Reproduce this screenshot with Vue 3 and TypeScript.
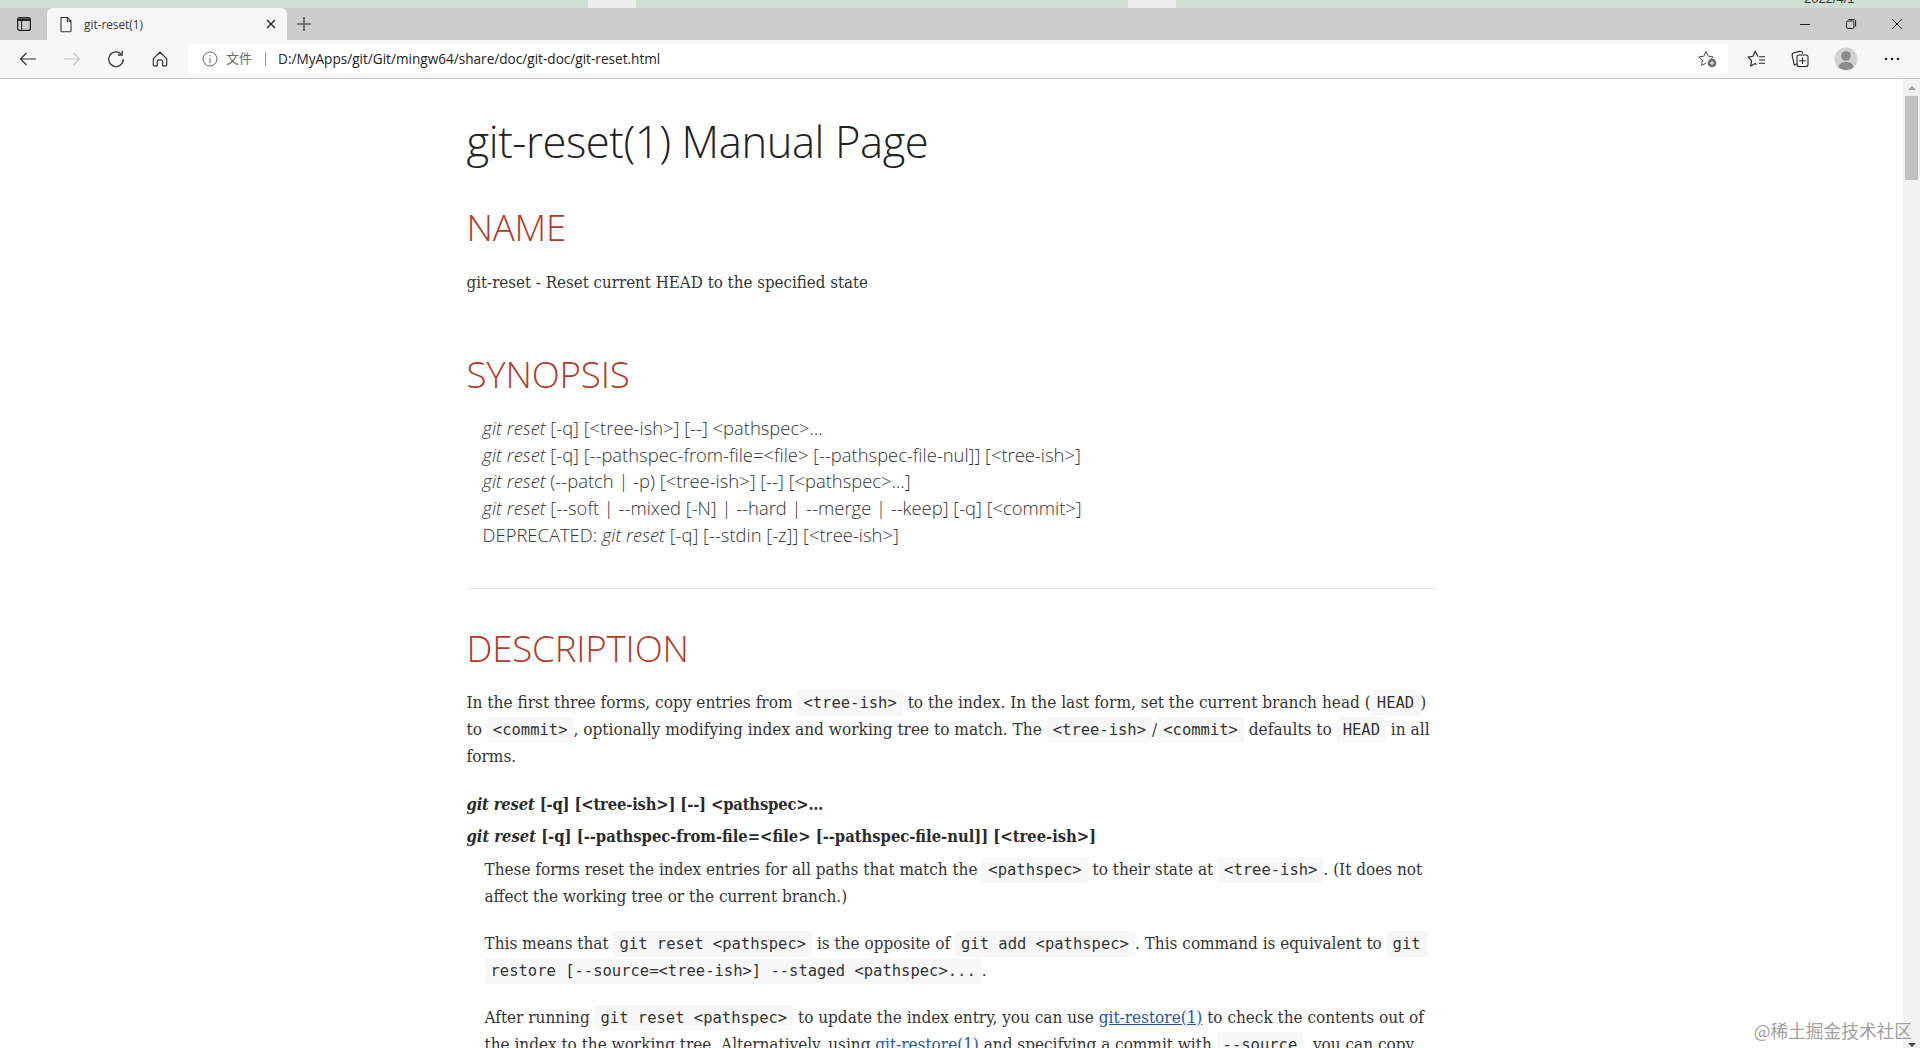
<script setup lang="ts">
const synopsis = [
  { pre: '', rest: ' [-q] [<tree-ish>] [--] <pathspec>…' },
  { pre: '', rest: ' [-q] [--pathspec-from-file=<file> [--pathspec-file-nul]] [<tree-ish>]' },
  { pre: '', rest: ' (--patch | -p) [<tree-ish>] [--] [<pathspec>…]' },
  { pre: '', rest: ' [--soft | --mixed [-N] | --hard | --merge | --keep] [-q] [<commit>]' },
  { pre: 'DEPRECATED: ', rest: ' [-q] [--stdin [-z]] [<tree-ish>]' },
]
</script>

<template>
  <div class="window">
    <div class="wallpaper">
      <span class="gap gap-a"></span>
      <span class="gap gap-b"></span>
      <span class="date">2022/4/1</span>
    </div>

    <div class="tabstrip">
      <div class="sidebtn">
        <svg width="16" height="16" viewBox="0 0 16 16" fill="none" stroke="#222" stroke-width="1.2">
          <rect x="1.6" y="1.6" width="12.8" height="12.8" rx="2" />
          <path d="M2 2.500h12v2.500H2z" fill="#222" stroke="none" />
          <path d="M5.600 5v9" stroke-width="1" />
        </svg>
      </div>
      <div class="tab">
        <svg width="14" height="17" viewBox="0 0 14 17" fill="none" stroke="#333" stroke-width="1.1">
          <path d="M2 1.500h6.500L12 5v10a.8.8 0 0 1-.8.8H2.800A.8.8 0 0 1 2 15z" />
          <path d="M8.300 1.500V5.300H12" />
        </svg>
        <span class="tab-title">git-reset(1)</span>
        <svg class="tab-close" width="10" height="10" viewBox="0 0 10 10" stroke="#222" stroke-width="1.4">
          <path d="M1 1l8 8M9 1l-8 8" />
        </svg>
      </div>
      <svg class="newtab" width="14" height="14" viewBox="0 0 14 14" stroke="#333" stroke-width="1.1">
        <path d="M7 0v14M0 7h14" />
      </svg>
      <div class="winctl">
        <svg width="12" height="12" viewBox="0 0 12 12" stroke="#222" stroke-width="1"><path d="M1 6.500h10" /></svg>
        <svg width="12" height="12" viewBox="0 0 12 12" fill="none" stroke="#222" stroke-width="1">
          <rect x="1.500" y="3" width="7.500" height="7.500" rx="1.400" />
          <path d="M3.500 1.500h5.500a1.600 1.600 0 0 1 1.600 1.600v5.400" />
        </svg>
        <svg width="12" height="12" viewBox="0 0 12 12" stroke="#222" stroke-width="1"><path d="M1 1l10 10M11 1L1 11" /></svg>
      </div>
    </div>

    <div class="toolbar">
      <div class="nav">
        <svg width="18" height="18" viewBox="0 0 18 18" fill="none" stroke="#333" stroke-width="1.200">
          <path d="M17 9H1.500M7.500 3L1.500 9l6 6" />
        </svg>
        <svg width="18" height="18" viewBox="0 0 18 18" fill="none" stroke="#c4c4c4" stroke-width="1.200">
          <path d="M1 9h15.500M10.500 3l6 6-6 6" />
        </svg>
        <svg width="18" height="18" viewBox="0 0 18 18" fill="none" stroke="#333" stroke-width="1.300">
          <path d="M14.300 4.200A7.300 7.300 0 1 0 16.300 9" />
          <path d="M15.200 .8v4.200h-4.200" />
        </svg>
        <svg width="18" height="18" viewBox="0 0 18 18" fill="none" stroke="#333" stroke-width="1.200">
          <path d="M2.300 8.600L9 2.200l6.700 6.400v6.200a1 1 0 0 1-1 1h-3v-4.600a1.400 1.400 0 0 0-1.400-1.400H7.700a1.400 1.400 0 0 0-1.400 1.400v4.600h-3a1 1 0 0 1-1-1z" stroke-linejoin="round" />
        </svg>
      </div>
      <div class="address">
        <svg width="16" height="16" viewBox="0 0 16 16" fill="none" stroke="#666" stroke-width="1">
          <circle cx="8" cy="8" r="7" />
          <path d="M8 7v5M8 4v1.400" />
        </svg>
        <span class="file">文件</span>
        <span class="sep"></span>
        <span class="url">D:/MyApps/git/Git/mingw64/share/doc/git-doc/git-reset.html</span>
        <svg class="addfav" width="20" height="18" viewBox="0 0 20 18" fill="none" stroke="#555" stroke-width="1">
          <path d="M12 10L15.200 6.900 10.200 6.200 8 1.500 5.800 6.200.8 6.900 4.400 10.400 3.600 15.500 8 13.200" stroke-linejoin="round" />
          <circle cx="14" cy="13" r="4.300" fill="#666" stroke="none" />
          <path d="M14 10.600v4.800M11.600 13h4.800" stroke="#fff" />
        </svg>
      </div>
      <div class="tools">
        <svg width="20" height="18" viewBox="0 0 20 18" fill="none" stroke="#222" stroke-width="1.100">
          <path d="M11 6.400L8.200 1.200 6 6.300l-5 .8 3.600 3.600-.9 5.300 4.500-2.400 1.400.8" stroke-linejoin="round" />
          <path d="M12 6.800h6M12 10h6M12 13.200h6" />
        </svg>
        <svg width="18" height="18" viewBox="0 0 18 18" fill="none" stroke="#222" stroke-width="1.100">
          <path d="M6 13.800L3.200 15 1.200 5.500a2.400 2.400 0 0 1 1.800-2.800l6.200-1.300a2 2 0 0 1 2.400 1.500l.2.8" />
          <rect x="6" y="5" width="11" height="11.500" rx="2" />
          <path d="M11.500 7.500v6.500M8.200 10.800h6.600" />
        </svg>
        <svg class="avatar" width="24" height="24" viewBox="0 0 24 24">
          <circle cx="12" cy="12" r="11.500" fill="#d2d2d2" />
          <circle cx="12" cy="9" r="4.800" fill="#8b8b8b" />
          <path d="M4.400 20.200C5 16.600 8 15 12 15s7 1.600 7.600 5.200A11.500 11.500 0 0 1 4.400 20.200z" fill="#8b8b8b" />
        </svg>
        <svg width="16" height="6" viewBox="0 0 16 6" fill="#222">
          <circle cx="2" cy="3" r="1.300" /><circle cx="8" cy="3" r="1.300" /><circle cx="14" cy="3" r="1.300" />
        </svg>
      </div>
    </div>

    <div class="viewport">
      <div class="page">
        <article class="doc">
          <h1>git-reset(1) Manual Page</h1>

          <h2 class="h-name">NAME</h2>
          <p class="name-line">git-reset - Reset current HEAD to the specified state</p>

          <h2 class="h-syn">SYNOPSIS</h2>
          <div class="verse">
            <div v-for="(line, i) in synopsis" :key="i">{{ line.pre }}<em>git reset</em>{{ line.rest }}</div>
          </div>

          <hr />

          <h2 class="h-desc">DESCRIPTION</h2>
          <p class="para">
            In the first three forms, copy entries from <code>&lt;tree-ish&gt;</code> to the index. In the last form, set the current branch head (<code>HEAD</code>)<br />
            to <code>&lt;commit&gt;</code>, optionally modifying index and working tree to match. The <code>&lt;tree-ish&gt;</code>/<code>&lt;commit&gt;</code> defaults to <code>HEAD</code> in all<br />
            forms.
          </p>

          <div class="dt first"><em>git reset</em> [-q] [&lt;tree-ish&gt;] [--] &lt;pathspec&gt;…</div>
          <div class="dt"><em>git reset</em> [-q] [--pathspec-from-file=&lt;file&gt; [--pathspec-file-nul]] [&lt;tree-ish&gt;]</div>

          <div class="dd">
            <p>
              These forms reset the index entries for all paths that match the <code>&lt;pathspec&gt;</code> to their state at <code>&lt;tree-ish&gt;</code>. (It does not<br />
              affect the working tree or the current branch.)
            </p>
            <p>
              This means that <code>git reset &lt;pathspec&gt;</code> is the opposite of <code>git add &lt;pathspec&gt;</code>. This command is equivalent to <code>git</code><br />
              <code>restore [--source=&lt;tree-ish&gt;] --staged &lt;pathspec&gt;...</code>.
            </p>
            <p>
              After running <code>git reset &lt;pathspec&gt;</code> to update the index entry, you can use <a>git-restore(1)</a> to check the contents out of<br />
              the index to the working tree. Alternatively, using <a>git-restore(1)</a> and specifying a commit with <code>--source</code>, you can copy
            </p>
          </div>
        </article>
      </div>
      <div class="scrollbar">
        <span class="arrow up"></span>
        <span class="thumb"></span>
        <span class="arrow down"></span>
      </div>
    </div>

    <div class="watermark">@稀土掘金技术社区</div>
  </div>
</template>

<style>
html, body { margin: 0; padding: 0; overflow: hidden; background: #fff; }
</style>

<style scoped>
.window {
  position: relative;
  width: 1920px;
  height: 1048px;
  display: flex;
  flex-direction: column;
  overflow: hidden;
  background: #fff;
  font-family: "Open Sans", sans-serif;
}
.wallpaper {
  position: relative;
  height: 8px;
  background: #cde0d2;
  overflow: hidden;
  flex: none;
}
.gap { position: absolute; top: 0; height: 8px; width: 48px; background: #ececec; }
.gap-a { left: 588px; }
.gap-b { left: 1128px; }
.date {
  position: absolute;
  left: 1804px;
  top: -8px;
  font: 13px/14px "Liberation Sans", sans-serif;
  color: #333;
}
.tabstrip {
  height: 32px;
  background: #cccccc;
  display: flex;
  align-items: center;
  flex: none;
}
.sidebtn { width: 47px; display: flex; justify-content: center; }
.tab {
  width: 240px;
  height: 32px;
  align-self: flex-end;
  background: #f7f7f7;
  border-radius: 6px 6px 0 0;
  display: flex;
  align-items: center;
  box-sizing: border-box;
  padding: 0 11px 0 12px;
}
.tab-title {
  font: 11.800px "Open Sans", sans-serif;
  color: #333;
  margin-left: 11px;
  flex: 1;
}
.newtab { margin-left: 10px; }
.winctl {
  margin-left: auto;
  display: flex;
  gap: 34px;
  padding-right: 17px;
}
.toolbar {
  height: 38px;
  background: #f7f7f7;
  border-bottom: 1px solid #c3c3c3;
  display: flex;
  align-items: center;
  flex: none;
}
.nav {
  display: flex;
  gap: 26px;
  width: 188px;
  box-sizing: border-box;
  padding-left: 19px;
  flex: none;
}
.address {
  width: 1540px;
  height: 30px;
  background: #fff;
  border-radius: 4px;
  display: flex;
  align-items: center;
  box-sizing: border-box;
  padding-left: 14px;
  flex: none;
}
.file {
  font: 13px/16px "Noto Sans CJK SC", sans-serif;
  color: #666;
  margin: 0 0 2px 8px;
}
.sep { width: 1px; height: 14px; background: #999; margin: 0 12px 0 13px; }
.url { font: 13.600px/16px "Open Sans", sans-serif; color: #222; margin-bottom: 1px; }
.addfav { margin-left: auto; margin-right: 10px; }
.tools {
  display: flex;
  align-items: center;
  flex: none;
  gap: 24px;
  padding-left: 19px;
}
.avatar { margin: 0 2px 0 1px; }
.viewport { flex: 1; display: flex; min-height: 0; }
.page {
  flex: 1;
  min-width: 0;
  overflow: hidden;
  display: flex;
  justify-content: center;
}
.scrollbar {
  width: 17px;
  background: #f1f1f1;
  position: relative;
  flex: none;
  display: flex;
  flex-direction: column;
  align-items: center;
}
.thumb { width: 13px; height: 84px; background: #c1c1c1; margin-top: 6px; }
.arrow { width: 0; height: 0; border-left: 4px solid transparent; border-right: 4px solid transparent; }
.arrow.up { border-bottom: 4px solid #a3a3a3; margin-top: 7px; }
.arrow.down { border-top: 4px solid #444; margin-top: auto; margin-bottom: 1px; }

.doc {
  width: 970px;
  flex: none;
  color: #333;
  font-family: "DejaVu Serif Condensed", "DejaVu Serif", serif;
  font-size: 17px;
  line-height: 27px;
}
h1, h2 {
  font-family: "Open Sans", sans-serif;
  font-weight: 300;
  margin: 0;
}
h1 {
  font-size: 43.500px;
  letter-spacing: -0.4px;
  line-height: 60px;
  color: #222;
  margin-top: 33px;
}
h2 { font-size: 36.700px; letter-spacing: -0.2px; line-height: 50px; color: #b23a28; }
.h-name { margin-top: 30px; }
.name-line { margin: 17px 0 0; font-size: 16.800px; }
.h-syn { margin-top: 53px; }
.verse {
  margin-top: 16px;
  padding-left: 16px;
  font-family: "Open Sans", sans-serif;
  font-weight: 300;
  font-size: 18.400px;
  color: #333;
  line-height: 26.700px;
  white-space: pre;
}
hr { border: 0; border-top: 1px solid #e6e6e6; margin: 39px 0 0; }
.h-desc { margin-top: 34px; }
.para { margin: 16px 0 0; white-space: nowrap; font-size: 17.100px; }
code {
  font-family: "DejaVu Sans Mono", monospace;
  font-size: 15.500px;
  line-height: 1;
  background: #f7f7f8;
  padding: 4px 6px;
  border-radius: 3px;
  color: #333;
}
.dt { font-size: 16.400px; font-weight: 700; white-space: nowrap; line-height: 27px; margin-top: 5px; color: #2a2a2a; }
.dt.first { margin-top: 21px; letter-spacing: -0.15px; }
.dd { margin-left: 18px; margin-top: 6px; white-space: nowrap; }
.dd p { margin: 0 0 20px; }
.dd a { color: #2156a5; text-decoration: underline; }
.watermark {
  position: absolute;
  right: 8px;
  bottom: 5px;
  font: 17.700px "Noto Sans CJK SC", sans-serif;
  color: #a0a0a0;
}
</style>
